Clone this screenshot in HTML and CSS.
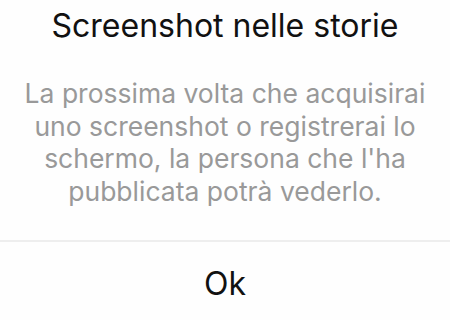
FILE: index.html
```html
<!DOCTYPE html>
<html lang="it">
<head>
<meta charset="utf-8">
<link rel="stylesheet" href="styles.css">
</head>
<body>
<div class="dialog">
  <div class="content">
    <h1 class="title">Screenshot nelle storie</h1>
    <p class="message">La prossima volta che acquisirai uno screenshot o registrerai lo schermo, la persona che l'ha pubblicata potrà vederlo.</p>
  </div>
  <div class="divider"></div>
  <button class="action">Ok</button>
</div>
</body>
</html>
```
FILE: styles.css
```css
html, body {
  margin: 0;
  padding: 0;
  background: #fefefe;
}
.dialog {
  width: 450px;
  height: 320px;
  display: flex;
  flex-direction: column;
  font-family: "Inter", "Liberation Sans", sans-serif;
  overflow: hidden;
}
.content {
  padding: 6px 10px 0;
  text-align: center;
}
.title {
  margin: 0;
  font-size: 32px;
  font-weight: 400;
  line-height: 40px;
  color: #111;
}
.message {
  margin: 31px 0 0;
  font-size: 26.5px;
  line-height: 32.5px;
  color: #999;
}
.divider {
  margin-top: 33px;
  height: 2px;
  background: #eeeeee;
}
.action {
  border: 0;
  background: transparent;
  font-family: inherit;
  font-size: 32px;
  color: #111;
  padding: 6px 0 0;
  height: 76px;
  cursor: pointer;
}
```
